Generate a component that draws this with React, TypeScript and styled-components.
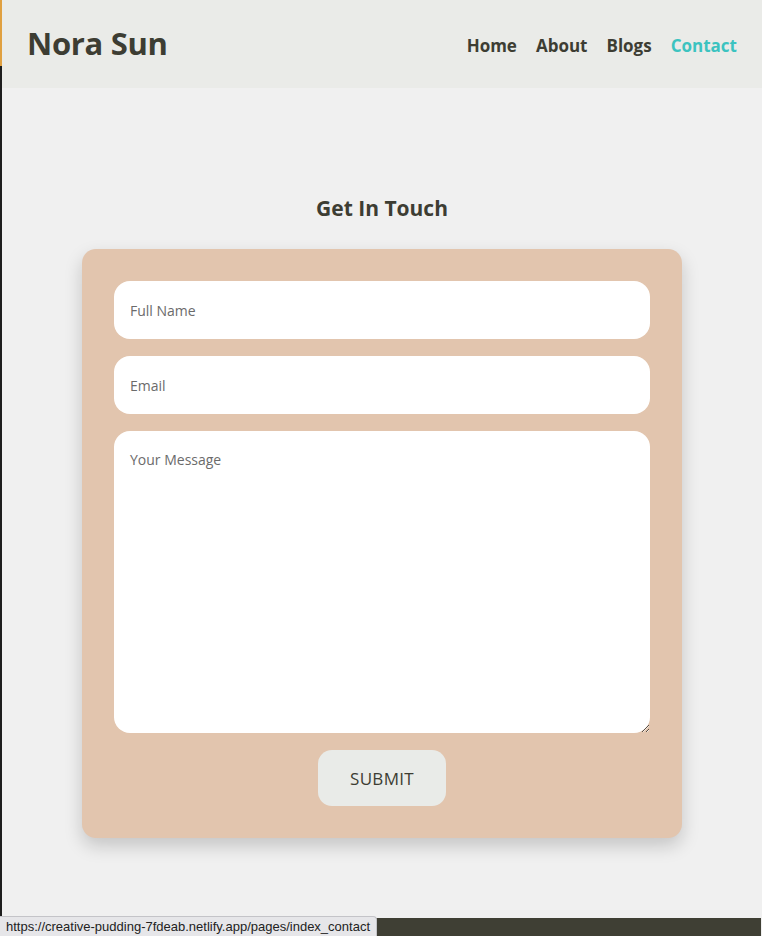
import React from "react";
import styled, { createGlobalStyle } from "styled-components";

const Global = createGlobalStyle`
  html, body { margin: 0; padding: 0; background: #f0f0f0; }
  body { font-family: "Open Sans", "Noto Sans", sans-serif; overflow: hidden; }
  * { box-sizing: border-box; }
`;

const Shell = styled.div`
  display: flex;
  width: 762px;
  height: 936px;
  position: relative;
  overflow: hidden;
`;

const EdgeStrip = styled.div`
  width: 2px;
  flex: none;
  background: linear-gradient(#e0a040 0, #e0a040 66px, #1e1e1e 66px);
`;

const Page = styled.div`
  flex: 1;
  display: flex;
  flex-direction: column;
  background: #f0f0f0;
  min-width: 0;
`;

const Header = styled.header`
  height: 88px;
  background: #eaebe8;
  display: flex;
  align-items: center;
  justify-content: space-between;
  padding: 0 25px 0 25px;
`;

const Logo = styled.div`
  font-size: 31px;
  font-weight: 700;
  color: #3d3d33;
  letter-spacing: -0.3px;
  margin-top: -2px;
`;

const Nav = styled.nav`
  display: flex;
  gap: 19px;
  margin-top: 2px;
`;

const NavLink = styled.a<{ $active?: boolean }>`
  font-size: 17px;
  font-weight: 700;
  text-decoration: none;
  color: ${(p) => (p.$active ? "#3cc3c0" : "#3d3d33")};
`;

const Main = styled.main`
  flex: 1;
  display: flex;
  flex-direction: column;
  align-items: center;
  padding-top: 105px;
`;

const Title = styled.h2`
  margin: 0 0 26px;
  font-size: 21px;
  font-weight: 700;
  color: #3d3d33;
  line-height: 30px;
`;

const Card = styled.form`
  width: 600px;
  background: #e2c5ae;
  border-radius: 14px;
  padding: 32px;
  display: flex;
  flex-direction: column;
  gap: 17px;
  box-shadow: 0 8px 18px rgba(0, 0, 0, 0.18);
`;

const Input = styled.input`
  height: 58px;
  border: none;
  border-radius: 16px;
  background: #fff;
  padding: 0 16px;
  font-family: inherit;
  font-size: 14px;
  color: #333;
  outline: none;
  &::placeholder { color: #6b6b6b; }
`;

const TextArea = styled.textarea`
  height: 302px;
  border: none;
  border-radius: 16px;
  background: #fff;
  padding: 19px 16px;
  font-family: inherit;
  font-size: 14px;
  resize: vertical;
  outline: none;
  &::placeholder { color: #6b6b6b; }
`;

const Submit = styled.button`
  align-self: center;
  width: 128px;
  height: 56px;
  border: none;
  border-radius: 14px;
  background: #e9ebe8;
  color: #3d3d33;
  font-family: inherit;
  font-size: 17px;
  letter-spacing: 0.3px;
  cursor: pointer;
`;

const Footer = styled.footer`
  height: 18px;
  background: #3f3f34;
  margin-right: 1px;
`;

const StatusTip = styled.div`
  position: absolute;
  left: 0;
  bottom: 0;
  height: 20px;
  padding: 0 6px;
  display: flex;
  align-items: center;
  background: #e6e6e9;
  border: 1px solid #c4c4c8;
  border-left: none;
  border-bottom: none;
  border-top-right-radius: 4px;
  font-family: "Liberation Sans", Arial, sans-serif;
  font-size: 13px;
  color: #222;
`;

export default function App() {
  return (
    <>
      <Global />
      <Shell>
        <EdgeStrip />
        <Page>
          <Header>
            <Logo>Nora Sun</Logo>
            <Nav>
              <NavLink href="#">Home</NavLink>
              <NavLink href="#">About</NavLink>
              <NavLink href="#">Blogs</NavLink>
              <NavLink href="#" $active>Contact</NavLink>
            </Nav>
          </Header>
          <Main>
            <Title>Get In Touch</Title>
            <Card onSubmit={(e) => e.preventDefault()}>
              <Input placeholder="Full Name" />
              <Input placeholder="Email" />
              <TextArea placeholder="Your Message" />
              <Submit type="submit">SUBMIT</Submit>
            </Card>
          </Main>
          <Footer />
        </Page>
        <StatusTip>https://creative-pudding-7fdeab.netlify.app/pages/index_contact</StatusTip>
      </Shell>
    </>
  );
}
